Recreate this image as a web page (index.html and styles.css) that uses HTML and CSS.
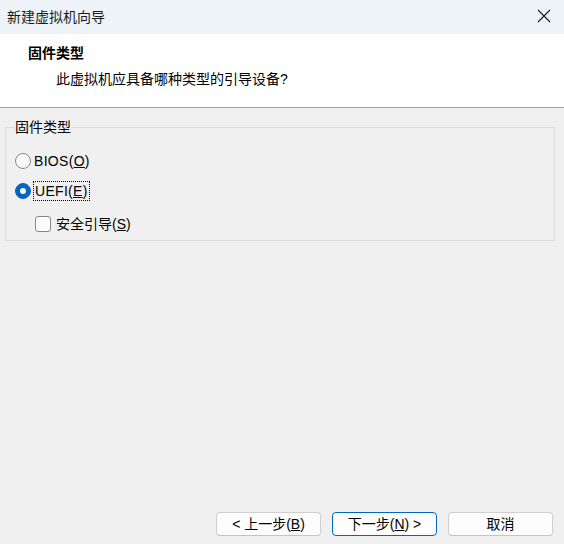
FILE: index.html
```html
<!DOCTYPE html>
<html lang="zh-CN">
<head>
<meta charset="utf-8">
<title>新建虚拟机向导</title>
<link rel="stylesheet" href="styles.css">
</head>
<body>
<div class="window">
  <div class="titlebar">
    <span class="title">新建虚拟机向导</span>
    <svg class="close" width="14" height="14" viewBox="0 0 14 14"><path d="M1 1 L13 13 M13 1 L1 13" stroke="#1a1a1a" stroke-width="1.1" fill="none"/></svg>
  </div>
  <div class="header">
    <div class="h-title">固件类型</div>
    <div class="h-sub">此虚拟机应具备哪种类型的引导设备?</div>
  </div>
  <div class="content">
    <fieldset class="group">
      <legend>固件类型</legend>
      <div class="row row-bios">
        <span class="radio"></span>
        <span class="label">BIOS(<u>O</u>)</span>
      </div>
      <div class="row row-uefi">
        <span class="radio checked"></span>
        <span class="label focus">UEFI(<u>E</u>)</span>
      </div>
      <div class="row row-secure">
        <span class="check"></span>
        <span class="label">安全引导(<u>S</u>)</span>
      </div>
    </fieldset>
  </div>
  <div class="footer">
    <button class="btn">&lt; 上一步(<u>B</u>)</button>
    <button class="btn default">下一步(<u>N</u>) &gt;</button>
    <button class="btn">取消</button>
  </div>
</div>
</body>
</html>
```
FILE: styles.css
```css
html, body {
  margin: 0;
  padding: 0;
}
body {
  font-family: "Liberation Sans", "Noto Sans CJK SC", sans-serif;
  font-size: 14px;
  color: #000;
  background: #f0f0f0;
}
.window {
  width: 564px;
  height: 544px;
  display: flex;
  flex-direction: column;
  overflow: hidden;
}
.titlebar {
  height: 34px;
  background: #eef3f9;
  display: flex;
  align-items: center;
  justify-content: space-between;
  padding: 0 13px 0 7px;
  box-sizing: border-box;
  flex: none;
}
.title {
  color: #1a1a1a;
  line-height: 18px;
  margin-top: -1px;
}
.close {
  display: block;
  margin-top: -2px;
}
.header {
  height: 73px;
  background: #fff;
  border-bottom: 1px solid #a0a0a0;
  flex: none;
}
.h-title {
  font-weight: bold;
  line-height: 18px;
  padding: 10px 0 0 28px;
}
.h-sub {
  line-height: 18px;
  padding: 8px 0 0 56px;
}
.content {
  flex: 1;
  padding: 11px 9px 0 5px;
}
.group {
  margin: 0;
  padding: 16px 0 6px 9px;
  border: 1px solid #dcdcdc;
  min-width: 0;
}
.group legend {
  padding: 0 1px;
  margin-left: -1px;
  line-height: 16px;
}
.row {
  display: flex;
  align-items: center;
  height: 20px;
}
.row-uefi {
  margin-top: 10px;
}
.row-secure {
  margin-top: 13px;
  padding-left: 20px;
}
.radio {
  width: 14px;
  height: 14px;
  border: 1px solid #878787;
  border-radius: 50%;
  background: #fbfbfb;
  flex: none;
  position: relative;
}
.radio.checked {
  border-color: #0067c0;
  background: #0067c0;
}
.radio.checked::after {
  content: "";
  position: absolute;
  left: 4px;
  top: 4px;
  width: 6px;
  height: 6px;
  border-radius: 50%;
  background: #fff;
}
.check {
  width: 14px;
  height: 14px;
  border: 1px solid #878787;
  border-radius: 3px;
  background: #fbfbfb;
  flex: none;
}
.label {
  margin-left: 3px;
  line-height: 18px;
  letter-spacing: 0.3px;
}
.row-secure .label {
  margin-left: 5px;
  letter-spacing: 0;
}
.label.focus {
  outline: 1px dotted #000;
  outline-offset: 0;
  padding: 0 1px;
  margin-left: 3px;
}
.footer {
  flex: none;
  display: flex;
  justify-content: flex-end;
  gap: 11px;
  padding: 0 11px 8px 0;
}
.btn {
  width: 105px;
  height: 24px;
  font-family: inherit;
  font-size: 14px;
  color: #000;
  background: #fdfdfd;
  border: 1px solid #d0d0d0;
  border-bottom-color: #c4c4c4;
  border-radius: 4px;
  padding: 0;
  line-height: 20px;
}
.btn.default {
  border-color: #0067c0;
}
```
